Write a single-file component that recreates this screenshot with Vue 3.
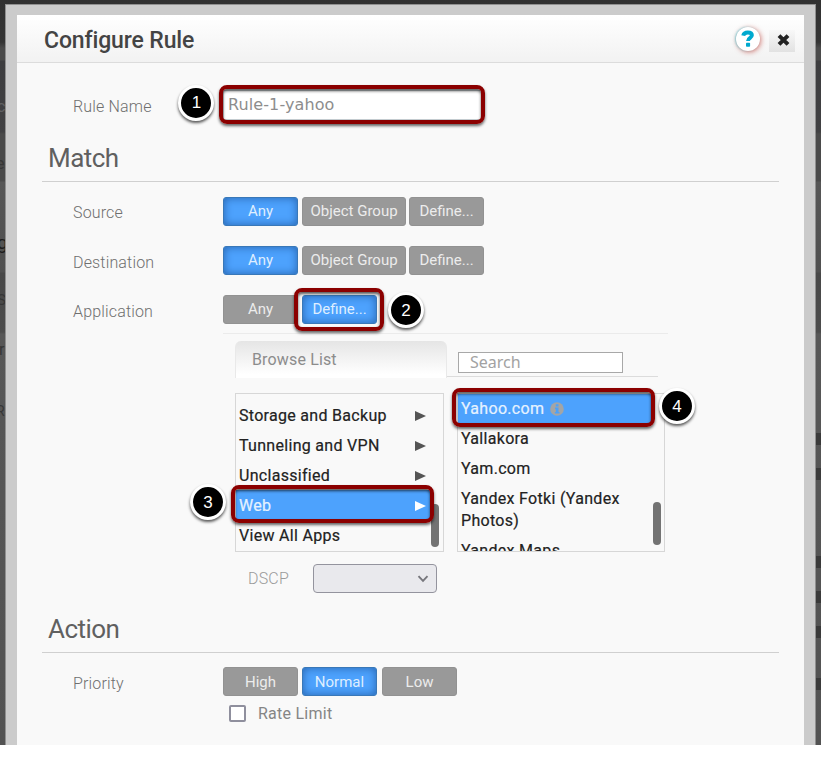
<script setup>
const networkRows = [
  { name: 'source', label: 'Source', options: [{ text: 'Any', on: true }, { text: 'Object Group', wide: true }, { text: 'Define...' }] },
  { name: 'destination', label: 'Destination', options: [{ text: 'Any', on: true }, { text: 'Object Group', wide: true }, { text: 'Define...' }] },
  { name: 'application', label: 'Application', options: [{ text: 'Any' }, { text: 'Define...', on: true, ring: true }] },
]
const priorities = [{ text: 'High' }, { text: 'Normal', on: true }, { text: 'Low' }]
const families = ['Storage and Backup', 'Tunneling and VPN', 'Unclassified', 'Web', 'View All Apps']
const apps = ['Yahoo.com', 'Yallakora', 'Yam.com', 'Yandex Fotki (Yandex Photos)', 'Yandex Maps']
</script>

<template>
  <div class="screen">
    <div class="behind left">
      <span class="ghost g1">c</span><span class="ghost g2">e</span><span class="ghost g3">g</span>
      <span class="ghost g4">S</span><span class="ghost g5">r</span><span class="ghost g6">R</span>
    </div>
    <div class="behind right">
      <i class="blk b1"></i><i class="blk b2"></i><i class="blk b3"></i>
      <i class="blk b4"></i><i class="blk b5"></i><i class="blk b6"></i>
    </div>
    <div class="frame">
      <div class="dialog">
        <header class="head">
          <h1>Configure Rule</h1>
          <div class="help">
            <svg width="14" height="18" viewBox="0 0 14 18">
              <path d="M2.2 5.6C2.8 3.1 4.6 2.5 6.8 2.5c2.6 0 4.1 1.1 4.1 2.8 0 2.6-3.9 2.4-3.9 5.6" fill="none" stroke="#00a9cf" stroke-width="3.9" />
              <rect x="5" y="12.8" width="4.1" height="4" rx=".8" fill="#00a9cf" />
            </svg>
          </div>
          <div class="close">
            <svg width="13" height="12" viewBox="0 0 13 12"><path d="M2 1.6l9 8.8M11 1.6l-9 8.8" stroke="#222" stroke-width="4" /></svg>
          </div>
        </header>

        <div class="row name-row">
          <span class="label">Rule Name</span>
          <div class="anchor">
            <div class="name-input">Rule-1-yahoo</div>
            <div class="ring ring-name"></div>
            <div class="badge badge-1">1</div>
          </div>
        </div>

        <h2 class="match">Match</h2>

        <div v-for="r in networkRows" :key="r.name" class="row" :class="r.name">
          <span class="label">{{ r.label }}</span>
          <div v-for="o in r.options" :key="o.text" class="anchor">
            <div class="btn" :class="{ on: o.on, wide: o.wide }">{{ o.text }}</div>
            <template v-if="o.ring">
              <div class="ring ring-define"></div>
              <div class="badge badge-2">2</div>
            </template>
          </div>
        </div>

        <section class="picker">
          <div class="tabs">
            <div class="tab">Browse List</div>
            <div class="search-wrap"><div class="search">Search</div></div>
          </div>
          <div class="lists">
            <div class="anchor">
              <div class="list families">
                <div v-for="f in families" :key="f" class="item" :class="{ sel: f === 'Web' }">
                  <span>{{ f }}</span>
                  <svg v-if="f !== 'View All Apps'" width="11" height="10" viewBox="0 0 11 10"><path d="M0 0L11 5L0 10Z" fill="currentColor" /></svg>
                </div>
              </div>
              <div class="thumb thumb-l"></div>
              <div class="ring ring-web"></div>
              <div class="badge badge-3">3</div>
            </div>
            <div class="anchor">
              <div class="list apps">
                <div v-for="a in apps" :key="a" class="item" :class="{ sel: a === 'Yahoo.com' }">
                  <span>{{ a }}</span>
                  <svg v-if="a === 'Yahoo.com'" class="info" width="14" height="14" viewBox="0 0 14 14">
                    <circle cx="7" cy="7" r="6.8" fill="#a3a5a6" />
                    <path d="M5.8 2.3h2.7v2.2H5.8zM5 5.6h3.5v4.3h1v1.7H4.9V9.9h1V7.3H5z" fill="#4ba1fb" />
                  </svg>
                </div>
              </div>
              <div class="thumb thumb-r"></div>
              <div class="ring ring-yahoo"></div>
              <div class="badge badge-4">4</div>
            </div>
          </div>
          <div class="dscp">
            <span>DSCP</span>
            <div class="select">
              <svg width="12" height="8" viewBox="0 0 12 8"><path d="M1.5 1.2L6 5.8l4.5-4.6" fill="none" stroke="#76767c" stroke-width="1.9" /></svg>
            </div>
          </div>
        </section>

        <h2 class="action">Action</h2>
        <div class="row priority">
          <span class="label">Priority</span>
          <div v-for="p in priorities" :key="p.text" class="btn" :class="{ on: p.on }">{{ p.text }}</div>
        </div>
        <div class="rate"><span class="check"></span><span>Rate Limit</span></div>
      </div>
    </div>
  </div>
</template>

<style>
body { background: #fff; overflow: hidden; }
</style>

<style scoped>
* { box-sizing: border-box; }
.screen {
  position: relative;
  width: 821px;
  height: 745px;
  padding: 4px 5px 0 5px;
  overflow: hidden;
  background: linear-gradient(#313131 0, #353535 42px, #4b4b4b 48px, #4b4b4b 60px, #3d3d3f 61px, #414143 132px, #4a4a4a 134px, #4a4a4a 181px, #565656 182px, #505050 272px, #484848 273px, #4c4c4c 332px, #575757 334px, #525252 100%);
  font-family: Roboto, sans-serif;
}
.behind { position: absolute; top: 0; width: 6px; height: 745px; overflow: hidden; }
.left { left: 0; }
.right { right: 0; }
.ghost { position: absolute; color: #363636; font-size: 16px; line-height: 20px; }
.g1 { top: 97px; left: -3px; color: #606063; }
.g2 { top: 154px; left: -4px; }
.g3 { top: 233px; left: -3px; font-size: 19px; color: #1d1d1d; }
.g4 { top: 290px; left: -3px; font-size: 15px; }
.g5 { top: 340px; left: -1px; }
.g6 { top: 401px; left: -4px; font-size: 14px; }
.blk { position: absolute; left: 1px; width: 5px; height: 12px; background: #3a3a3a; }
.b1 { top: 433px; }
.b2 { top: 468px; }
.b3 { top: 556px; }
.b4 { top: 591px; }
.b5 { top: 626px; }
.b6 { top: 678px; }
.frame {
  position: relative;
  width: 811px;
  height: 741px;
  padding: 10px 11px 0;
  border: 1px solid #909090;
  border-bottom: 0;
  background: #cbcbcb;
}
.dialog { width: 787px; height: 730px; background: #f9f9f9; }
.head {
  display: flex;
  height: 48px;
  padding: 0 8px 0 27px;
  border-bottom: 1px solid #dcdcdc;
  background: linear-gradient(#fff, #f2f2f2);
}
h1 { flex: 1; margin: 0; font-size: 23px; font-weight: 500; line-height: 51px; letter-spacing: -.13px; color: #444; }
.help {
  display: flex;
  align-items: center;
  justify-content: center;
  width: 24px;
  height: 24px;
  margin: 12px 10px 0 0;
  border-radius: 50%;
  background: #fff;
  box-shadow: 1px 1px 5px rgba(190, 60, 50, .65), -1px 0 2px rgba(40, 210, 230, .55);
}
.close {
  display: flex;
  align-items: center;
  justify-content: center;
  width: 26px;
  height: 22px;
  margin: 15px 1px 0 -1px;
  padding: 0 0 2px 2px;
  background: linear-gradient(#f8f8f8, #e2e2e2);
}
.row { display: flex; gap: 4px; height: 29px; padding-left: 56px; }
.label { width: 146px; font-size: 16px; font-weight: 300; line-height: 33px; letter-spacing: .16px; color: #6f6f6f; }
.anchor { position: relative; }
.name-row { margin-top: 27px; }
.name-input {
  width: 260px;
  height: 30px;
  padding-left: 4px;
  border: 1px solid #c8d0d4;
  background: #fff;
  font-family: "DejaVu Sans", sans-serif;
  font-size: 16px;
  line-height: 28px;
  letter-spacing: .1px;
  color: #8d8d8d;
}
h2 { margin: 0 0 0 25px; padding-left: 6px; border-bottom: 1px solid #d0d0d0; width: 737px; font-size: 26px; font-weight: 400; letter-spacing: -.55px; color: #606060; }
.match { height: 42px; margin-top: 21px; line-height: 37px; }
.source { margin-top: 15px; }
.destination { margin-top: 20px; }
.application { margin-top: 20px; }
.source .label { line-height: 31px; }
.application .label { line-height: 33px; }
.btn {
  width: 75px;
  height: 29px;
  border: 1px solid #929292;
  border-radius: 3px;
  background: #999;
  font-size: 15px;
  line-height: 27px;
  text-align: center;
  color: #ececec;
}
.row .anchor:nth-child(4) { margin-left: -1px; }
.wide { width: 104px; }
.on { border-color: #3978b8; background: #4da2fd; box-shadow: inset 0 0 8px rgba(10, 50, 110, .55); color: #dfeeff; }
.ring {
  position: absolute;
  z-index: 2;
  border: 4px solid #8b0000;
  border-radius: 8px;
  box-shadow: 0 2px 3px rgba(0, 0, 0, .6), inset 0 2px 3px rgba(0, 0, 0, .65);
}
.badge {
  position: absolute;
  z-index: 3;
  width: 36px;
  height: 36px;
  border: 3px solid #fff;
  border-radius: 50%;
  background: #000;
  box-shadow: 0 2px 3px rgba(0, 0, 0, .65);
  font-family: "Liberation Sans", sans-serif;
  font-size: 17px;
  line-height: 29px;
  text-align: center;
  color: #fff;
}
.ring-name { left: -4px; top: -5px; width: 266px; height: 39px; }
.badge-1 { left: -45px; top: -5px; padding-left: 1px; }
.ring-define { left: -8px; top: -7px; width: 90px; height: 43px; }
.badge-2 { left: 86px; top: -3px; line-height: 31px; }
.picker { width: 445px; height: 274px; margin: 9px 0 0 206px; border-top: 1px solid #ebebeb; }
.tabs { display: flex; height: 44px; padding: 7px 0 0 12px; }
.tab {
  width: 212px;
  height: 37px;
  padding-left: 16px;
  border: solid #e9e9e9;
  border-width: 0 1px;
  border-radius: 6px 6px 0 0;
  background: linear-gradient(#e5e5e5, #fff 90%);
  font-size: 16px;
  line-height: 37px;
  letter-spacing: .15px;
  color: #8c8c8c;
}
.search-wrap { width: 211px; height: 36px; padding: 11px 0 0 11px; border-bottom: 1px solid #dcdcdc; }
.search {
  width: 165px;
  height: 21px;
  padding-left: 11px;
  border: 1px solid #a8a8a8;
  background: #fff;
  font-family: "Noto Sans", sans-serif;
  font-size: 16px;
  line-height: 19px;
  color: #a2a2a2;
}
.lists { display: flex; gap: 13px; margin: 15px 0 0 13px; }
.list { width: 209px; height: 159px; margin-left: -1px; border: 1px solid #d7d7d7; overflow: hidden; font-size: 16px; letter-spacing: .3px; -webkit-text-stroke: .2px currentColor; color: #222; }
.families { padding-top: 6px; }
.item { display: flex; align-items: center; min-height: 30px; padding: 0 2px 0 3px; line-height: 22px; }
.families .item { justify-content: space-between; padding: 1px 5px 0 3px; width: 195px; }
.families svg { color: #555; }
.item.sel { background: #4da2fd; color: #e6f2ff; }
.families .sel svg { color: #fff; }
.apps { margin-left: 0; width: 208px; }
.apps .item { width: 195px; padding: 4px 0 4px 3px; }
.info { margin-left: 6px; }
.thumb { position: absolute; width: 8px; border-radius: 4px; background: #737373; }
.thumb-l { left: 195px; top: 111px; height: 43px; }
.thumb-r { left: 196px; top: 109px; height: 43px; }
.ring-web { left: -5px; top: 92px; width: 203px; height: 38px; }
.badge-3 { left: -46px; top: 91px; line-height: 31px; }
.ring-yahoo { left: -5px; top: -5px; width: 203px; height: 39px; }
.badge-4 { left: 202px; top: -5px; line-height: 31px; }
.dscp { display: flex; margin: 12px 0 0 25px; font-size: 16px; line-height: 30px; color: #9b9b9b; font-weight: 300; }
.dscp span { width: 65px; letter-spacing: .2px; }
.select {
  display: flex;
  align-items: center;
  justify-content: flex-end;
  width: 124px;
  height: 29px;
  padding-right: 7px;
  border: 1px solid #94949e;
  border-radius: 4px;
  background: #e9e9ed;
}
.action { height: 46px; line-height: 45px; }
.priority { margin-top: 14px; }
.priority .btn { line-height: 28px; }
.priority .btn:last-child { margin-left: 1px; }
.rate { display: flex; align-items: center; gap: 12px; height: 20px; margin: 7px 0 0 212px; font-size: 16px; letter-spacing: .25px; color: #858585; }
.check { width: 17px; height: 17px; border: 2px solid #8f8f9d; border-radius: 2px; background: #fff; }
</style>
